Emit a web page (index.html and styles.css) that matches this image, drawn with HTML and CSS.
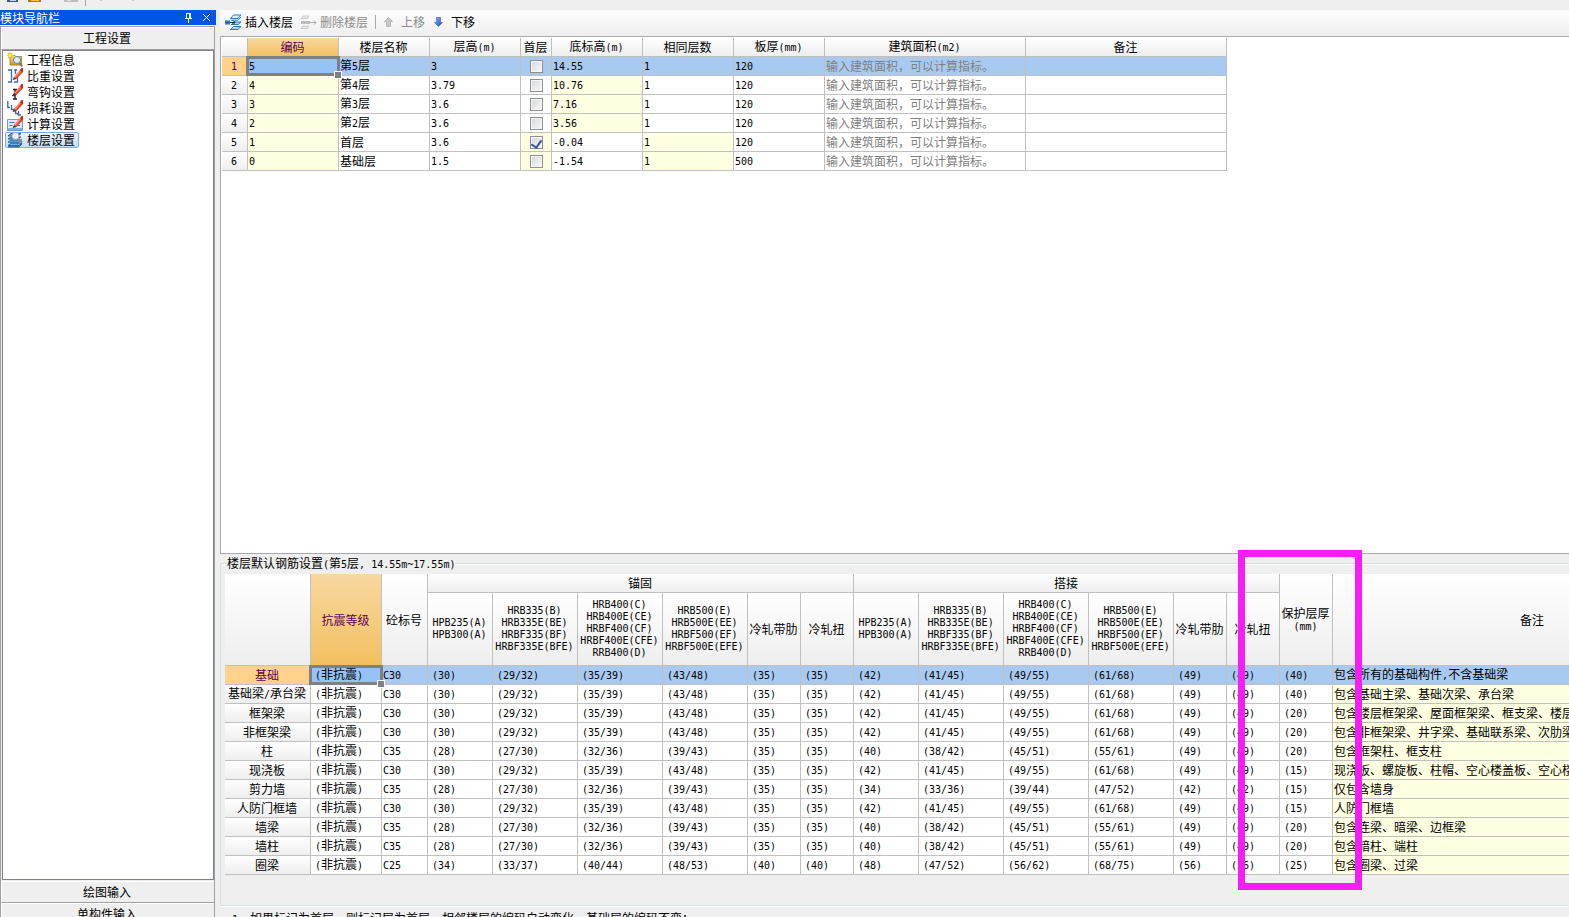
FILE: index.html
```html
<!DOCTYPE html>
<html lang="zh-CN">
<head>
<meta charset="utf-8">
<title>楼层设置</title>
<link rel="stylesheet" href="styles.css">
</head>
<body>
<svg class="defs" aria-hidden="true">
  <defs>
    <linearGradient id="blade" x1="0" y1="0" x2="1" y2="1"><stop offset="0" stop-color="#ffffff"/><stop offset="1" stop-color="#8fc0e8"/></linearGradient>
    <linearGradient id="arrow" x1="0" y1="0" x2="1" y2="1"><stop offset="0" stop-color="#8fb4ff"/><stop offset="1" stop-color="#1746b8"/></linearGradient>
    <linearGradient id="folder" x1="0" y1="0" x2="0" y2="1"><stop offset="0" stop-color="#f6dc8c"/><stop offset="1" stop-color="#c8962c"/></linearGradient>
    <g id="pencil">
      <path d="M7 9 13 2 15.800 4.200 9.500 11z" fill="#e8472c"/>
      <path d="M7.400 8.800 13.200 2 14.200 2.800 8.200 9.800z" fill="#ff9a7c"/>
      <path d="M12.800 2.400 14.500 0 16 0 16 3.200 15.300 4.500z" fill="#d8280c"/>
      <path d="M7 9 9.500 11 5.600 12z" fill="#3a3030"/>
    </g>
  </defs>
</svg>
<div class="app">
  <div class="topbar">
    <svg width="500" height="6" viewBox="0 0 500 6" aria-hidden="true">
      <path d="M7 0h11v2H7z" fill="#3c5a80"/><path d="M10 0h6v1h-6z" fill="#c8d4e0"/>
      <path d="M28 0h13v2H28z" fill="#b07814"/><path d="M31 0h8v1h-8z" fill="#f0c850"/>
      <path d="M64 0h14v2H64z" fill="#bdbdbd"/><path d="M67 0h4v1h-4z" fill="#e4e4e4"/>
      <path d="M85 0h1v6h-1z" fill="#a0a0a0"/><path d="M100 0h2v1h-2zM132 0h2v1h-2z" fill="#c8c8c8"/>
    </svg>
  </div>
  <div class="workspace">
    <aside class="sidebar">
      <header class="dock-title">
        <h1>模块导航栏</h1>
        <button class="dock-btn" aria-label="固定"><svg width="9" height="10" viewBox="0 0 9 10"><path d="M2 .5h5M2.500 0v5.500M5.500 0v5.500M6.500 0v5.500M1 5.500h7M4.500 6v4" fill="none" stroke="#fff"/></svg></button>
        <button class="dock-btn" aria-label="关闭"><svg width="9" height="9" viewBox="0 0 9 9"><path d="M1 1l7 7M8 1l-7 7" fill="none" stroke="#fff"/></svg></button>
      </header>
      <div class="sections">
        <button class="section-btn">工程设置</button>
        <nav class="tree">
          <a href="#info"><svg width="16" height="16" viewBox="0 0 16 16"><path d="M3 3.500h5l1 1h5.500V13H3z" fill="url(#folder)" stroke="#a07a28" stroke-width=".8"/><path d="M3 0v7M0 3.500h7M.8 1l4.600 5M5.400 1 .8 6" stroke="#e8c020" stroke-width="1.200"/><circle cx="3" cy="3.500" r="1.300" fill="#fff7b0"/><path d="m12.500 11 2.800 3.500" stroke="#8a6a40" stroke-width="1.800"/><circle cx="10" cy="8" r="3.500" fill="#dceeff" stroke="#6d7f94"/></svg><span>工程信息</span></a>
          <a href="#weight"><svg width="16" height="16" viewBox="0 0 16 16"><path d="M1 2h3.500v12H1M7 14h3.500V9M7 2h3M8.500 2v4" fill="none" stroke="#3a6ba8" stroke-width="1.300"/><use href="#pencil"/></svg><span>比重设置</span></a>
          <a href="#hook"><svg width="16" height="16" viewBox="0 0 16 16"><path d="M8 5v10M6 5.500h4M6 15h4M5.500 12 8 9.500" fill="none" stroke="#222" stroke-width="1.400"/><use href="#pencil"/></svg><span>弯钩设置</span></a>
          <a href="#loss"><svg width="16" height="16" viewBox="0 0 16 16"><path d="M.8 1v6.500H3M4.500 5v4.500H7M8.500 11v2.500h2.500V15M11.500 11v4H14" fill="none" stroke="#3a6ba8" stroke-width="1.300"/><use href="#pencil"/></svg><span>损耗设置</span></a>
          <a href="#calc"><svg width="16" height="16" viewBox="0 0 16 16"><path d="M.5 3.500h15v11H.5z" fill="#dcebfb" stroke="#6c9bd0"/><path d="M1 12h14v2H1z" fill="#7db0e8"/><path d="M2.500 6.500h5M2.500 9.500h3M10 9.500h3" stroke="#3a78c0"/><use href="#pencil"/></svg><span>计算设置</span></a>
          <a href="#floor" class="current" aria-current="page"><svg width="16" height="16" viewBox="0 0 16 16"><path d="M1 4 4 1.500h10L11 4zM1 7 4 5h10L11 7zM1 10.200 4 8h11L12 10.200zM1 13.500 4 11.200h11L12 13.500z" fill="#6db2ee" stroke="#1c5c9c" stroke-width=".9"/><path d="M1 14.800h11l3-3" fill="none" stroke="#173f70"/><path d="m11 6 4 4.500" stroke="#8c9098" stroke-width="2"/><circle cx="8.500" cy="4" r="3.600" fill="#eef6fc" stroke="#9aa4ae"/></svg><span>楼层设置</span></a>
        </nav>
        <button class="section-btn">绘图输入</button>
        <button class="section-btn">单构件输入</button>
      </div>
    </aside>

    <main class="main">
      <div class="toolbar" role="toolbar">
        <button class="tool"><svg width="17" height="17" viewBox="0 0 17 17"><path d="M5.500 4.500 8.500 1h7.500L13 4.500zM6.500 10.500 9 8h7l-3 2.500zM5.500 15.500 8.500 12.500H16l-3 3z" fill="url(#blade)" stroke="#2a7ab8"/><path d="M13 6.200 16 3M6 6.200h7" fill="none" stroke="#2a7ab8"/><path d="M0 6.500h5v4H0z" fill="#3f6fa8"/><path d="M5 8.500h5M8 6.500l2 2-2 2" fill="none" stroke="#16222e"/></svg><span>插入楼层</span></button>
        <button class="tool tool-off" disabled><svg width="17" height="17" viewBox="0 0 17 17"><path d="M1 4.500 3 2h6L7.500 4.500zM1 14.500 3 12h6l-1.500 2.500z" fill="#e8e8e8" stroke="#cacaca"/><path d="M1 7h9v3H1z" fill="#bcbcbc"/><path d="M10 8.500h6M14 6.500l2 2-2 2" fill="none" stroke="#a8a8a8"/></svg><span>删除楼层</span></button>
        <span class="tool-sep"></span>
        <button class="tool tool-move tool-off" disabled><svg width="9" height="10" viewBox="0 0 9 10"><path d="M4.500.5 8.500 4.500H6.500V9.500h-4V4.500H.5z" fill="#c8c8c8" stroke="#b8b8b8"/></svg><span>上移</span></button>
        <button class="tool tool-move"><svg width="9" height="10" viewBox="0 0 9 10"><path d="M4.500 9.500 8.500 5.500H6.500V.5h-4v5H.5z" fill="url(#arrow)" stroke="#4a6fd0" stroke-width=".8"/></svg><span>下移</span></button>
      </div>

      <section class="floors">
        <table class="grid floor-grid">
          <colgroup><col class="w26"><col class="w91"><col class="w91"><col class="w91"><col class="w31"><col class="w91"><col class="w91"><col class="w91"><col class="w201"><col class="w201"></colgroup>
          <thead><tr><th></th><th class="hot">编码</th><th>楼层名称</th><th>层高<i>(m)</i></th><th>首层</th><th>底标高<i>(m)</i></th><th>相同层数</th><th>板厚<i>(mm)</i></th><th>建筑面积<i>(m2)</i></th><th>备注</th></tr></thead>
          <tbody>
            <tr class="sel"><th><i>1</i></th><td class="cursor"><i>5</i></td><td>第<i>5</i>层</td><td><i>3</i></td><td class="tick"><input type="checkbox" aria-label="第5层为首层"></td><td><i>14.55</i></td><td><i>1</i></td><td><i>120</i></td><td class="hint">输入建筑面积，可以计算指标。</td><td></td></tr>
            <tr><th><i>2</i></th><td class="ro"><i>4</i></td><td>第<i>4</i>层</td><td><i>3.79</i></td><td class="tick"><input type="checkbox" aria-label="第4层为首层"></td><td class="ro"><i>10.76</i></td><td><i>1</i></td><td><i>120</i></td><td class="hint">输入建筑面积，可以计算指标。</td><td></td></tr>
            <tr><th><i>3</i></th><td class="ro"><i>3</i></td><td>第<i>3</i>层</td><td><i>3.6</i></td><td class="tick"><input type="checkbox" aria-label="第3层为首层"></td><td class="ro"><i>7.16</i></td><td><i>1</i></td><td><i>120</i></td><td class="hint">输入建筑面积，可以计算指标。</td><td></td></tr>
            <tr><th><i>4</i></th><td class="ro"><i>2</i></td><td>第<i>2</i>层</td><td><i>3.6</i></td><td class="tick"><input type="checkbox" aria-label="第2层为首层"></td><td class="ro"><i>3.56</i></td><td><i>1</i></td><td><i>120</i></td><td class="hint">输入建筑面积，可以计算指标。</td><td></td></tr>
            <tr><th><i>5</i></th><td class="ro"><i>1</i></td><td>首层</td><td><i>3.6</i></td><td class="tick ro"><input type="checkbox" aria-label="首层为首层" checked></td><td><i>-0.04</i></td><td class="ro"><i>1</i></td><td><i>120</i></td><td class="hint">输入建筑面积，可以计算指标。</td><td></td></tr>
            <tr><th><i>6</i></th><td class="ro"><i>0</i></td><td>基础层</td><td><i>1.5</i></td><td class="tick ro"><input type="checkbox" aria-label="基础层为首层"></td><td><i>-1.54</i></td><td class="ro"><i>1</i></td><td><i>500</i></td><td class="hint">输入建筑面积，可以计算指标。</td><td></td></tr>
          </tbody>
        </table>
      </section>

      <section class="rebar">
        <h2>楼层默认钢筋设置<i>(</i>第<i>5</i>层<i>, 14.55m~17.55m)</i></h2>
        <div class="rebar-box">
          <table class="grid rebar-grid">
            <colgroup><col class="w86"><col class="w71"><col class="w46"><col class="w65"><col class="w85"><col class="w85"><col class="w85"><col class="w53"><col class="w53"><col class="w65"><col class="w85"><col class="w85"><col class="w85"><col class="w53"><col class="w53"><col class="w53"><col class="w400"></colgroup>
            <thead>
              <tr><th rowspan="2"></th><th rowspan="2" class="hot">抗震等级</th><th rowspan="2">砼标号</th><th colspan="6">锚固</th><th colspan="6">搭接</th><th rowspan="2">保护层厚<br><i>(mm)</i></th><th rowspan="2">备注</th></tr>
              <tr class="grades"><th><i>HPB235(A)<br>HPB300(A)</i></th><th><i>HRB335(B)<br>HRB335E(BE)<br>HRBF335(BF)<br>HRBF335E(BFE)</i></th><th><i>HRB400(C)<br>HRB400E(CE)<br>HRBF400(CF)<br>HRBF400E(CFE)<br>RRB400(D)</i></th><th><i>HRB500(E)<br>HRB500E(EE)<br>HRBF500(EF)<br>HRBF500E(EFE)</i></th><th>冷轧带肋</th><th>冷轧扭</th><th><i>HPB235(A)<br>HPB300(A)</i></th><th><i>HRB335(B)<br>HRB335E(BE)<br>HRBF335(BF)<br>HRBF335E(BFE)</i></th><th><i>HRB400(C)<br>HRB400E(CE)<br>HRBF400(CF)<br>HRBF400E(CFE)<br>RRB400(D)</i></th><th><i>HRB500(E)<br>HRB500E(EE)<br>HRBF500(EF)<br>HRBF500E(EFE)</i></th><th>冷轧带肋</th><th>冷轧扭</th></tr>
            </thead>
            <tbody>
              <tr class="sel"><th>基础</th><td class="cursor"><i>(</i>非抗震<i>)</i></td><td><i>C30</i></td><td><i>(30)</i></td><td><i>(29/32)</i></td><td><i>(35/39)</i></td><td><i>(43/48)</i></td><td><i>(35)</i></td><td><i>(35)</i></td><td><i>(42)</i></td><td><i>(41/45)</i></td><td><i>(49/55)</i></td><td><i>(61/68)</i></td><td><i>(49)</i></td><td><i>(49)</i></td><td><i>(40)</i></td><td>包含所有的基础构件<i>,</i>不含基础梁</td></tr>
              <tr><th>基础梁<i>/</i>承台梁</th><td><i>(</i>非抗震<i>)</i></td><td><i>C30</i></td><td><i>(30)</i></td><td><i>(29/32)</i></td><td><i>(35/39)</i></td><td><i>(43/48)</i></td><td><i>(35)</i></td><td><i>(35)</i></td><td><i>(42)</i></td><td><i>(41/45)</i></td><td><i>(49/55)</i></td><td><i>(61/68)</i></td><td><i>(49)</i></td><td><i>(49)</i></td><td><i>(40)</i></td><td class="ro">包含基础主梁、基础次梁、承台梁</td></tr>
              <tr><th>框架梁</th><td><i>(</i>非抗震<i>)</i></td><td><i>C30</i></td><td><i>(30)</i></td><td><i>(29/32)</i></td><td><i>(35/39)</i></td><td><i>(43/48)</i></td><td><i>(35)</i></td><td><i>(35)</i></td><td><i>(42)</i></td><td><i>(41/45)</i></td><td><i>(49/55)</i></td><td><i>(61/68)</i></td><td><i>(49)</i></td><td><i>(49)</i></td><td><i>(20)</i></td><td class="ro">包含楼层框架梁、屋面框架梁、框支梁、楼层主肋梁、屋面主肋梁</td></tr>
              <tr><th>非框架梁</th><td><i>(</i>非抗震<i>)</i></td><td><i>C30</i></td><td><i>(30)</i></td><td><i>(29/32)</i></td><td><i>(35/39)</i></td><td><i>(43/48)</i></td><td><i>(35)</i></td><td><i>(35)</i></td><td><i>(42)</i></td><td><i>(41/45)</i></td><td><i>(49/55)</i></td><td><i>(61/68)</i></td><td><i>(49)</i></td><td><i>(49)</i></td><td><i>(20)</i></td><td class="ro">包含非框架梁、井字梁、基础联系梁、次肋梁</td></tr>
              <tr><th>柱</th><td><i>(</i>非抗震<i>)</i></td><td><i>C35</i></td><td><i>(28)</i></td><td><i>(27/30)</i></td><td><i>(32/36)</i></td><td><i>(39/43)</i></td><td><i>(35)</i></td><td><i>(35)</i></td><td><i>(40)</i></td><td><i>(38/42)</i></td><td><i>(45/51)</i></td><td><i>(55/61)</i></td><td><i>(49)</i></td><td><i>(49)</i></td><td><i>(20)</i></td><td class="ro">包含框架柱、框支柱</td></tr>
              <tr><th>现浇板</th><td><i>(</i>非抗震<i>)</i></td><td><i>C30</i></td><td><i>(30)</i></td><td><i>(29/32)</i></td><td><i>(35/39)</i></td><td><i>(43/48)</i></td><td><i>(35)</i></td><td><i>(35)</i></td><td><i>(42)</i></td><td><i>(41/45)</i></td><td><i>(49/55)</i></td><td><i>(61/68)</i></td><td><i>(49)</i></td><td><i>(49)</i></td><td><i>(15)</i></td><td class="ro">现浇板、螺旋板、柱帽、空心楼盖板、空心楼盖板柱帽</td></tr>
              <tr><th>剪力墙</th><td><i>(</i>非抗震<i>)</i></td><td><i>C35</i></td><td><i>(28)</i></td><td><i>(27/30)</i></td><td><i>(32/36)</i></td><td><i>(39/43)</i></td><td><i>(35)</i></td><td><i>(35)</i></td><td><i>(34)</i></td><td><i>(33/36)</i></td><td><i>(39/44)</i></td><td><i>(47/52)</i></td><td><i>(42)</i></td><td><i>(42)</i></td><td><i>(15)</i></td><td class="ro">仅包含墙身</td></tr>
              <tr><th>人防门框墙</th><td><i>(</i>非抗震<i>)</i></td><td><i>C30</i></td><td><i>(30)</i></td><td><i>(29/32)</i></td><td><i>(35/39)</i></td><td><i>(43/48)</i></td><td><i>(35)</i></td><td><i>(35)</i></td><td><i>(42)</i></td><td><i>(41/45)</i></td><td><i>(49/55)</i></td><td><i>(61/68)</i></td><td><i>(49)</i></td><td><i>(49)</i></td><td><i>(15)</i></td><td class="ro">人防门框墙</td></tr>
              <tr><th>墙梁</th><td><i>(</i>非抗震<i>)</i></td><td><i>C35</i></td><td><i>(28)</i></td><td><i>(27/30)</i></td><td><i>(32/36)</i></td><td><i>(39/43)</i></td><td><i>(35)</i></td><td><i>(35)</i></td><td><i>(40)</i></td><td><i>(38/42)</i></td><td><i>(45/51)</i></td><td><i>(55/61)</i></td><td><i>(49)</i></td><td><i>(49)</i></td><td><i>(20)</i></td><td class="ro">包含连梁、暗梁、边框梁</td></tr>
              <tr><th>墙柱</th><td><i>(</i>非抗震<i>)</i></td><td><i>C35</i></td><td><i>(28)</i></td><td><i>(27/30)</i></td><td><i>(32/36)</i></td><td><i>(39/43)</i></td><td><i>(35)</i></td><td><i>(35)</i></td><td><i>(40)</i></td><td><i>(38/42)</i></td><td><i>(45/51)</i></td><td><i>(55/61)</i></td><td><i>(49)</i></td><td><i>(49)</i></td><td><i>(20)</i></td><td class="ro">包含暗柱、端柱</td></tr>
              <tr><th>圈梁</th><td><i>(</i>非抗震<i>)</i></td><td><i>C25</i></td><td><i>(34)</i></td><td><i>(33/37)</i></td><td><i>(40/44)</i></td><td><i>(48/53)</i></td><td><i>(40)</i></td><td><i>(40)</i></td><td><i>(48)</i></td><td><i>(47/52)</i></td><td><i>(56/62)</i></td><td><i>(68/75)</i></td><td><i>(56)</i></td><td><i>(56)</i></td><td><i>(25)</i></td><td class="ro">包含圈梁、过梁</td></tr>
            </tbody>
          </table>
        </div>
        <div class="marker"></div>
      </section>
      <p class="note"><i>1</i>、如果标记为首层，则标记层为首层，相邻楼层的编码自动变化，基础层的编码不变；</p>
    </main>
  </div>
</div>
</body>
</html>
```

FILE: styles.css
```css
* { box-sizing: border-box; }

body {
  margin: 0;
  height: 100vh;
  overflow: hidden;
  background: #efefef;
  color: #000;
  font: 12px/16px "Noto Sans CJK SC", sans-serif;
}

/* half-width Latin text: 6px per character next to 12px Chinese */
i {
  font: 10px/12px "DejaVu Sans Mono", "Liberation Mono", monospace;
  white-space: pre;
}

h1, h2, p { margin: 0; font-size: 12px; font-weight: 400; }

button {
  border: 0;
  padding: 0;
  background: none;
  color: inherit;
  font: inherit;
}

svg { display: block; flex: none; }

.defs { position: absolute; width: 0; height: 0; }

/* the window is a little taller than the viewport and runs off its bottom edge */
.app {
  display: flex;
  flex-direction: column;
  height: calc(100vh + 9px);
}

.topbar { height: 10px; flex: none; }

.workspace { display: flex; flex: 1; min-height: 0; }

/* navigation dock */
.sidebar {
  display: flex;
  flex-direction: column;
  flex: none;
  width: 216px;
}

.dock-title {
  display: flex;
  align-items: center;
  gap: 9px;
  height: 15px;
  padding-right: 5px;
  background: #0054e6;
  color: #fff;
}
.dock-title h1 { flex: 1; font-size: 12px; line-height: 14px; }

.sections {
  display: flex;
  flex-direction: column;
  flex: 1;
  width: 215px;
  margin-top: 1px;
  border: 1px solid #a0a0a0;
}

.section-btn {
  height: 22px;
  flex: none;
  padding-right: 2px;
  border-top: 1px solid #fff;
  border-left: 1px solid #fff;
  border-bottom: 1px solid #a0a0a0;
  line-height: 20px;
}
.section-btn:first-child { height: 23px; padding-bottom: 2px; }

.tree {
  display: flex;
  flex-direction: column;
  align-items: flex-start;
  flex: 1;
  min-height: 0;
  margin: 0 0 1px 1px;
  padding: 1px 2px;
  border: 1px solid #80808a;
  background: #fff;
}
.tree a {
  display: flex;
  align-items: center;
  gap: 4px;
  height: 16px;
  padding: 0 3px 0 1px;
  border: 1px solid transparent;
  border-radius: 2px;
  color: #000;
  text-decoration: none;
  line-height: 14px;
}
.tree .current {
  border-color: #84acdd;
  background: linear-gradient(#eef5fd, #c6dcf7);
}

/* main pane */
.main {
  display: flex;
  flex-direction: column;
  flex: 1;
  min-width: 0;
  padding-left: 4px;
}

.toolbar {
  display: flex;
  align-items: center;
  gap: 7px;
  flex: none;
  height: 26px;
  padding: 0 0 2px 5px;
  background: linear-gradient(#fdfdfd, #efefef);
}
.tool { display: flex; align-items: center; gap: 3px; line-height: 24px; }
.tool-move { gap: 8px; padding-right: 2px; }
.tool-off { color: #8c8c8c; }
.tool-sep { width: 1px; height: 14px; margin-right: 1px; background: #a8a8a8; }

.floors {
  flex: 1;
  min-height: 0;
  padding: 1px;
  border: solid #a8aab0;
  border-width: 1px 0 1px 1px;
  background: #fff;
  overflow: hidden;
}

/* shared grid */
.grid {
  table-layout: fixed;
  border-collapse: separate;
  border-spacing: 0;
}
.grid th, .grid td {
  height: 19px;
  padding: 0;
  border: solid #c0c0c0;
  border-width: 0 1px 1px 0;
  font-weight: 400;
  line-height: 12px;
  white-space: nowrap;
}
.grid th {
  padding-right: 1px;
  text-align: center;
  background: linear-gradient(#fff, #eee);
}
.grid td {
  padding-left: 1px;
  text-align: left;
  background: #fff;
}
.grid .ro { background: #ffffe1; }
.grid .hot {
  background: linear-gradient(#f8d8a0, #f2c060);
  color: #5c0058;
}
.grid .sel td { background: #a8caf0; }
.grid .sel th { background: #ffd28c; color: #5c0058; }
.grid .hint { color: #808080; }
.grid .tick { padding: 0; text-align: center; }

.grid .sel .cursor { position: relative; background: #95c3f4; }
.cursor::before {
  content: "";
  position: absolute;
  inset: -1px -2px -1px -2px;
  border: 3px solid #808080;
}
.cursor::after {
  content: "";
  position: absolute;
  right: -4px;
  bottom: -4px;
  width: 6px;
  height: 6px;
  border: 1px solid #fff;
  background: #808080;
}

.w26 { width: 26px; }
.w31 { width: 31px; }
.w46 { width: 46px; }
.w53 { width: 53px; }
.w65 { width: 65px; }
.w71 { width: 71px; }
.w85 { width: 85px; }
.w86 { width: 86px; }
.w91 { width: 91px; }
.w201 { width: 201px; }
.w400 { width: 400px; }

.floor-grid { width: 1005px; }

.rebar-grid { width: 1508px; }
.rebar-grid .grades th { height: 73px; }
.rebar-grid .grades i { display: block; }
.rebar-grid td { padding-left: 4px; }
.rebar-grid td:nth-child(3),
.rebar-grid td:last-child { padding-left: 1px; }

input[type="checkbox"] {
  appearance: none;
  display: block;
  width: 13px;
  height: 13px;
  margin: 0 auto;
  border: 1px solid #8e8f8f;
  background: linear-gradient(135deg, #d2d6da, #fafafa);
  box-shadow: inset 0 0 0 1px #f6f6f6;
}
input[type="checkbox"]:checked::before {
  content: "";
  display: block;
  width: 5px;
  height: 8px;
  margin: 1px auto;
  border: solid #34549c;
  border-width: 0 2px 2px 0;
  transform: rotate(35deg);
}

/* group box with the reinforcement defaults */
.rebar {
  position: relative;
  flex: none;
  margin-top: 2px;
}
.rebar h2 {
  position: relative;
  z-index: 1;
  width: max-content;
  height: 14px;
  margin-left: 7px;
  background: #efefef;
  line-height: 14px;
}
.rebar-box {
  margin-top: -7px;
  padding: 10px 0 30px 4px;
  border: solid #d5dfe5;
  border-width: 1px 0 1px 1px;
  border-radius: 3px 0 0 3px;
  box-shadow: 0 1px #fff, inset 0 1px #fff;
  overflow: hidden;
}

/* highlight round the cover-thickness column */
.marker {
  position: absolute;
  top: -6px;
  left: 1018px;
  z-index: 2;
  width: 124px;
  height: 340px;
  border: 7px solid #f81cf8;
}

.note {
  flex: none;
  height: 20px;
  padding: 4px 0 0 12px;
  white-space: nowrap;
}
```
